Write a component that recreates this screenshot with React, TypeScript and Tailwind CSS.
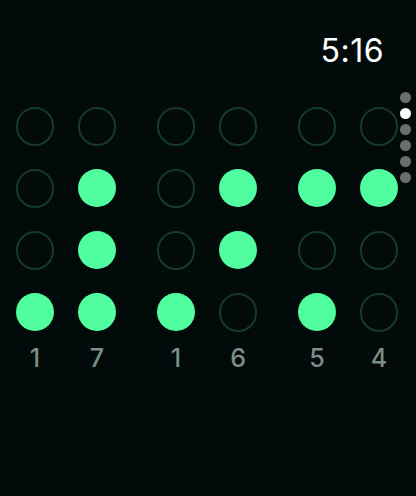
import React from "react";

const groups: { digits: number[]; cols: boolean[][] }[] = [
  {
    digits: [1, 7],
    cols: [
      [false, false, false, true],
      [false, true, true, true],
    ],
  },
  {
    digits: [1, 6],
    cols: [
      [false, false, false, true],
      [false, true, true, false],
    ],
  },
  {
    digits: [5, 4],
    cols: [
      [false, true, false, true],
      [false, true, false, false],
    ],
  },
];

function Dot({ on }: { on: boolean }) {
  return on ? (
    <div className="w-[38px] h-[38px] rounded-full bg-[#50fea0]" />
  ) : (
    <div className="w-[39px] h-[39px] rounded-full border-[2px] border-[#163a29]" />
  );
}

export default function App() {
  return (
    <div
      className="relative w-[416px] h-[496px] bg-[#020b0a] overflow-hidden"
      style={{ fontFamily: "Inter, 'Liberation Sans', sans-serif" }}
    >
      <div className="flex justify-end pr-[32px] pt-[31px] h-[107px]">
        <span className="text-white text-[32px] leading-[40px] tracking-[0.5px]">5:16</span>
      </div>
      <div className="flex pl-[16px] gap-[41px]">
        {groups.map((g, gi) => (
          <div key={gi} className="flex gap-[24px]">
            {g.cols.map((col, ci) => (
              <div key={ci} className="flex flex-col items-center w-[38px]">
                <div className="flex flex-col gap-[24px] items-center">
                  {col.map((on, ri) => (
                    <div key={ri} className="w-[38px] h-[38px] flex items-center justify-center">
                      <Dot on={on} />
                    </div>
                  ))}
                </div>
                <span className="mt-[13px] text-[25px] leading-[28px] text-[#7b8f86] font-medium">
                  {g.digits[ci]}
                </span>
              </div>
            ))}
          </div>
        ))}
      </div>
      <div className="absolute left-[400px] top-[92px] flex flex-col gap-[5px]">
        {[0, 1, 2, 3, 4, 5].map((i) => (
          <div
            key={i}
            className={
              i === 1
                ? "w-[11px] h-[11px] rounded-full bg-white"
                : "w-[11px] h-[11px] rounded-full bg-[#6a6d6c]"
            }
          />
        ))}
      </div>
    </div>
  );
}
